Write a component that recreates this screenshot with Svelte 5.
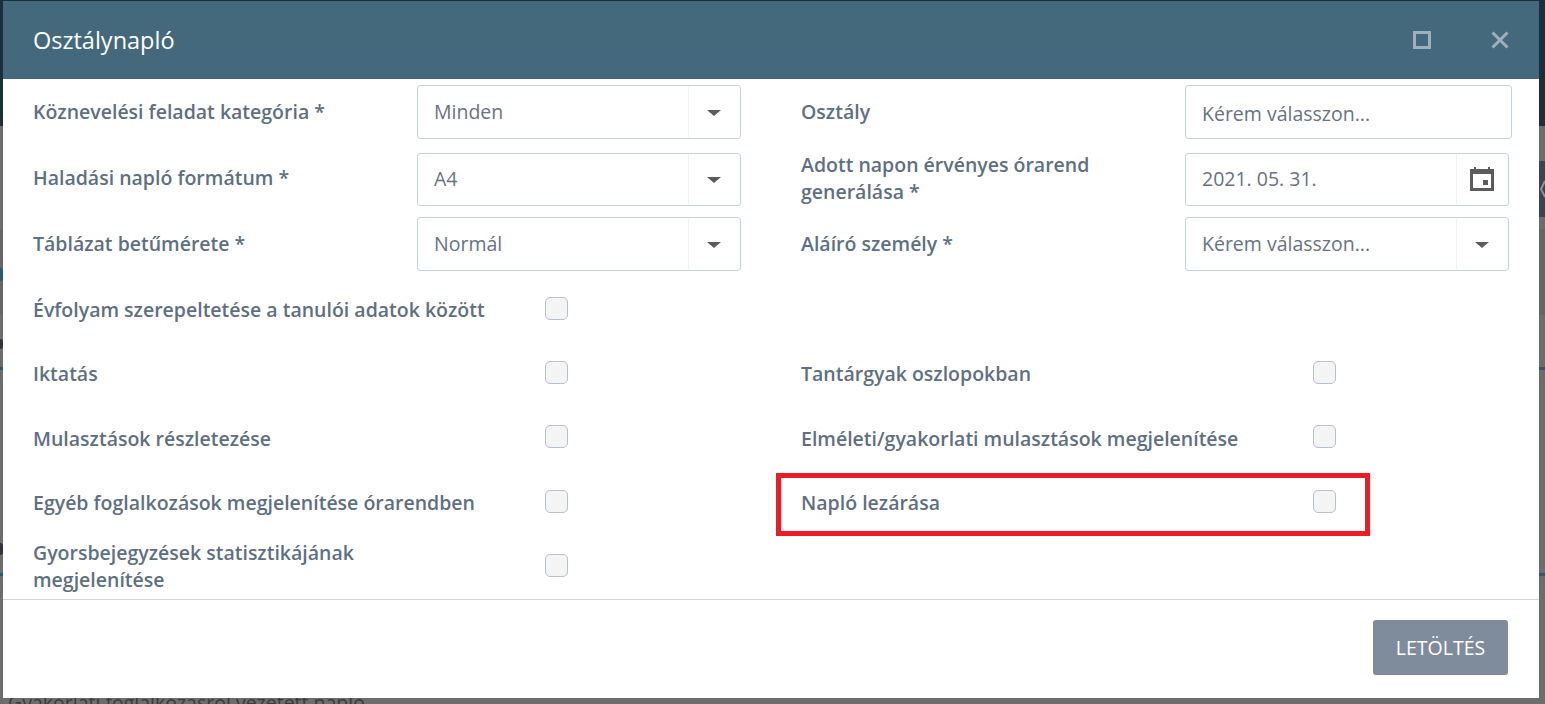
<script>
  const checkRows = [
    ['Évfolyam szerepeltetése a tanulói adatok között', null],
    ['Iktatás', 'Tantárgyak oszlopokban'],
    ['Mulasztások részletezése', 'Elméleti/gyakorlati mulasztások megjelenítése'],
    ['Egyéb foglalkozások megjelenítése órarendben', 'Napló lezárása'],
    ['Gyorsbejegyzések statisztikájának megjelenítése', null]
  ];
</script>

<div class="page">
  <div class="backdrop">
    <div class="band top"></div>
    <div class="band gray1"></div>
    <div class="band pager"><svg width="5" height="20" viewBox="0 0 5 20"><path d="M5 2L1 10l4 8" fill="none" stroke="#8d9196" stroke-width="2"/></svg></div>
    <div class="band gray2"></div>
    <div class="band gray3"></div>
    <div class="band gray4"></div>
    <div class="band blue"></div>
    <div class="band gray5"></div>
    <div class="band blue"></div>
    <span class="blob b1"></span>
    <span class="blob b2"></span>
    <span class="blob b3"></span>
  </div>
  <p class="behind">Gyakorlati foglalkozásról vezetett napló</p>

  <div class="modal">
    <header class="modal-head">
      <h2>Osztálynapló</h2>
      <div class="head-icons">
        <svg width="18" height="18" viewBox="0 0 18 18"><rect x="1.5" y="1.5" width="15" height="15" fill="none" stroke="#9db0bb" stroke-width="3"/></svg>
        <svg width="18" height="18" viewBox="0 0 18 18"><path d="M1.5 1.5l15 15M16.5 1.5l-15 15" fill="none" stroke="#9db0bb" stroke-width="3"/></svg>
      </div>
    </header>

    <div class="modal-body">
      <div class="row first">
        <div class="cell">
          <span class="label">Köznevelési feladat kategória *</span>
          <div class="field"><span class="value">Minden</span><span class="arrow"><i></i></span></div>
        </div>
        <div class="cell">
          <span class="label">Osztály</span>
          <div class="field wide"><span class="value">Kérem válasszon...</span></div>
        </div>
      </div>
      <div class="row second">
        <div class="cell">
          <span class="label lifted">Haladási napló formátum *</span>
          <div class="field"><span class="value">A4</span><span class="arrow"><i></i></span></div>
        </div>
        <div class="cell">
          <span class="label narrow">Adott napon érvényes órarend generálása *</span>
          <div class="field"><span class="value">2021. 05. 31.</span>
            <span class="arrow">
              <svg width="24" height="24" viewBox="0 0 24 24"><path fill="#5c5c5c" fill-rule="evenodd" d="M4 0h2v2h12V0h2v2h4v22H0V2h4zM3 7v14h18V7zm10 6h5v5h-5z"/></svg>
            </span>
          </div>
        </div>
      </div>
      <div class="row third">
        <div class="cell">
          <span class="label">Táblázat betűmérete *</span>
          <div class="field"><span class="value">Normál</span><span class="arrow"><i></i></span></div>
        </div>
        <div class="cell">
          <span class="label">Aláíró személy *</span>
          <div class="field"><span class="value">Kérem válasszon...</span><span class="arrow"><i></i></span></div>
        </div>
      </div>

      {#each checkRows as pair}
        <div class="row check-row">
          {#each pair as text}
            <div class="cell">
              {#if text}
                <span class="label check-label">{text}</span>
                <span class="checkbox"></span>
                {#if text === 'Napló lezárása'}<div class="highlight"></div>{/if}
              {/if}
            </div>
          {/each}
        </div>
      {/each}
    </div>

    <footer class="modal-foot">
      <button>LETÖLTÉS</button>
    </footer>
  </div>
</div>

<style>
  :global(body) {
    margin: 0;
    font-family: "Open Sans", sans-serif;
  }
  .page {
    position: relative;
    height: 704px;
    overflow: hidden;
    background: #6d6d6d;
  }
  .band.top { height: 126px; background: #1b2f38; }
  .band.gray1 { height: 35px; background: #6d6d6d; }
  .band.pager {
    height: 56px;
    background: linear-gradient(90deg, #6d6d6d 1539px, #3a444e 1539px);
    display: flex;
    align-items: center;
    justify-content: flex-end;
  }
  .band.gray2 { height: 12px; background: #6d6d6d; }
  .band.gray3 { height: 86px; background: #676767; }
  .band.gray4 { height: 52px; background: #6d6d6d; }
  .band.blue { height: 3px; background: #2a5a70; }
  .band.gray5 { height: 203px; background: #6d6d6d; }
  .blob {
    position: absolute;
    left: 0;
    width: 3px;
    border-radius: 0 6px 6px 0;
  }
  .b1 { top: 268px; height: 13px; background: #2a5a70; }
  .b2 { top: 339px; height: 10px; background: #2f3438; }
  .b3 { top: 543px; height: 12px; background: #2f3438; }
  .behind {
    position: absolute;
    left: 8px;
    top: 690px;
    margin: 0;
    font-size: 19.5px;
    line-height: 26px;
    color: #3b3b3b;
  }
  .modal {
    position: absolute;
    left: 3px;
    top: 1px;
    width: 1536px;
    height: 697px;
    background: #fff;
    display: flex;
    flex-direction: column;
  }
  .modal-head {
    height: 78px;
    flex: none;
    background: #44697c;
    display: flex;
    align-items: center;
    justify-content: space-between;
    padding: 0 30px;
  }
  h2 {
    margin: 0;
    font-size: 23.5px;
    font-weight: 400;
    color: #fff;
  }
  .head-icons {
    display: flex;
    align-items: center;
    gap: 60px;
  }
  .modal-body {
    flex: 1;
    padding: 6px 0 0 30px;
    border-bottom: 1px solid #d5d5d5;
  }
  .row {
    display: grid;
    grid-template-columns: 768px 1fr;
    align-items: center;
  }
  .first { height: 54px; margin-bottom: 13px; }
  .second { height: 54px; margin-bottom: 11px; }
  .third { height: 54px; margin-bottom: 5px; }
  .check-row { height: 64.3px; }
  .cell {
    position: relative;
    display: flex;
    align-items: center;
  }
  .label {
    width: 384px;
    flex: none;
    margin-top: -2px;
    font-size: 19.5px;
    line-height: 27px;
    font-weight: 600;
    color: #5f6f82;
  }
  .label.lifted { margin-top: -4px; }
  .label.narrow {
    width: 320px;
    margin-right: 64px;
  }
  .check-label {
    width: 512px;
    padding-right: 56px;
    box-sizing: border-box;
    padding-top: 5px;
  }
  .check-row:last-child .label { margin-top: -4px; }
  .field {
    width: 324px;
    height: 54px;
    box-sizing: border-box;
    border: 1px solid #c3d2e0;
    border-radius: 3px;
    display: flex;
    align-items: center;
    font-size: 19.5px;
    color: #68727f;
  }
  .second .field {
    height: 53px;
    align-self: flex-start;
  }
  .field.wide { width: 327px; }
  .value {
    flex: 1;
    padding-left: 16px;
    margin-top: -2px;
  }
  .wide .value { margin-top: 2px; }
  .arrow {
    width: 51px;
    height: 50px;
    flex: none;
    border-left: 1px solid #eef0f2;
    display: flex;
    align-items: center;
    justify-content: center;
  }
  .arrow svg { margin-right: 2px; }
  .arrow i {
    width: 0;
    height: 0;
    border: 7.5px solid transparent;
    border-top: 6px solid #5c5c5c;
    border-bottom: 0;
    margin: 2px 2px 0 0;
  }
  .checkbox {
    width: 23px;
    height: 23px;
    box-sizing: border-box;
    border: 1px solid #b3c1d2;
    border-radius: 5px;
    background: #f4f4f4;
  }
  .highlight {
    position: absolute;
    left: -25px;
    top: -13px;
    width: 594px;
    height: 63px;
    box-sizing: border-box;
    border: 5px solid #ed1c24;
  }
  .modal-foot {
    height: 98px;
    flex: none;
    display: flex;
    justify-content: flex-end;
    align-items: flex-start;
    padding: 20px 31px 0 0;
    box-sizing: border-box;
  }
  button {
    width: 135px;
    height: 55px;
    border: 0;
    border-radius: 3px;
    background: #7f8c9b;
    color: #fff;
    font: 400 19.5px "Open Sans", sans-serif;
  }
</style>
